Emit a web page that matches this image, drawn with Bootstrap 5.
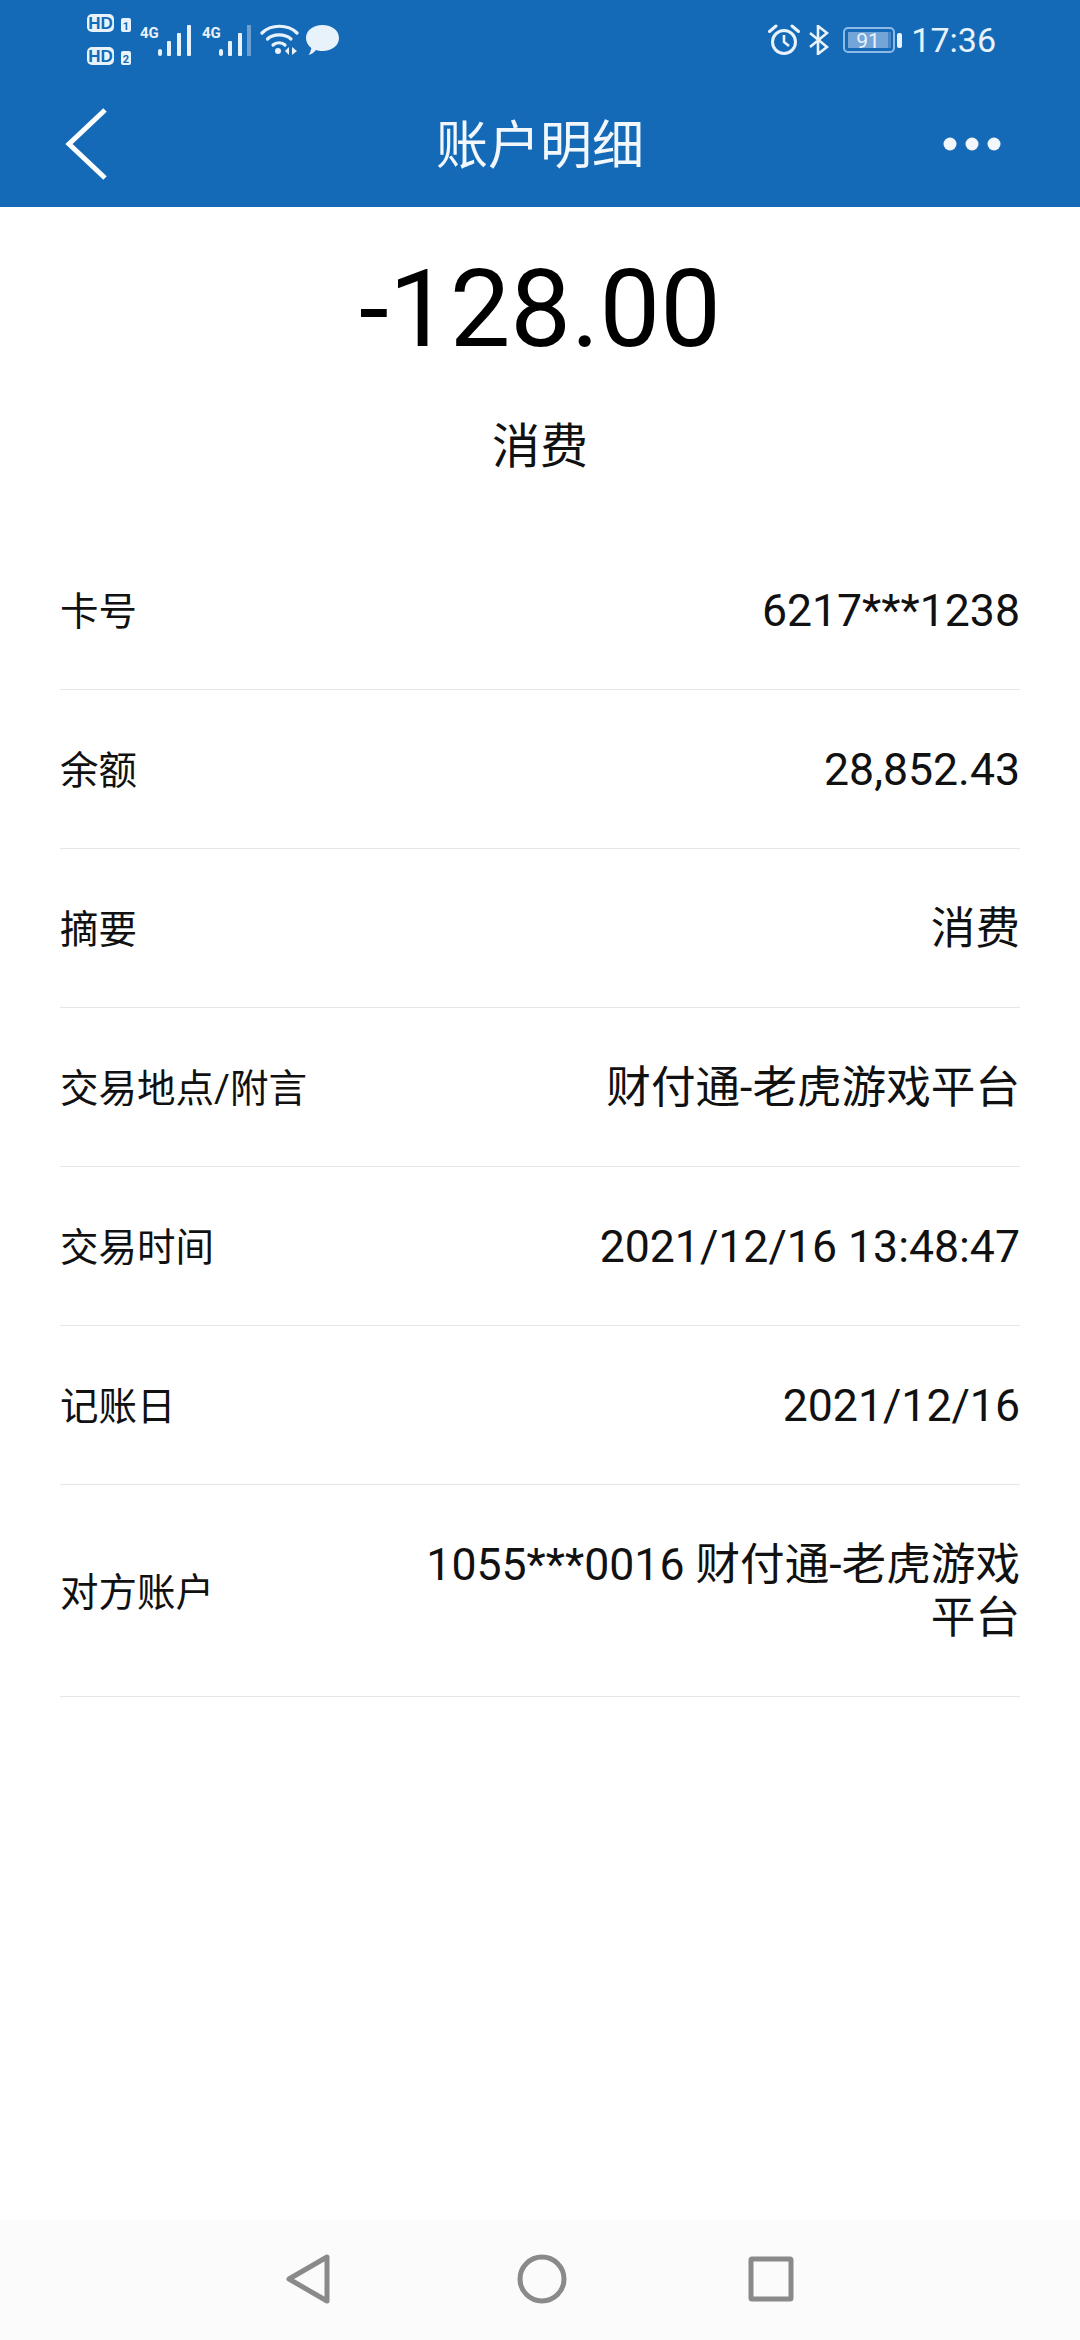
<!DOCTYPE html>
<html lang="zh-CN">
<head>
    <meta charset="UTF-8">
    <meta name="viewport" content="width=device-width, initial-scale=1.0">
    <title>账户明细</title>
    <link href="https://cdn.jsdelivr.net/npm/bootstrap@5.3.0/dist/css/bootstrap.min.css" rel="stylesheet">
    <style>
        html, body { height: 100%; }
        body { width: 1080px; height: 2340px; overflow: hidden; font-family: Roboto, "Noto Sans CJK SC", sans-serif; color: #111; background: #fff; }
        .page-wrap { height: 2340px; }
        .app-head { height: 207px; background: #156ab7; color: #fff; }
        .status-row { height: 80px; padding: 0 84px 0 86px; }
        .status-row svg { display: block; flex: none; }
        .status-time { font-size: 34px; line-height: 1; margin-left: 9px; color: #e8f2fb; }
        .title-row { height: 127px; padding: 0 60px; }
        .head-title { font-size: 52px; line-height: 1; color: #f2f7fc; margin-left: 28px; padding-top: 6px; }
        .back-arrow { margin-left: 5px; }
        .more-dots { margin-right: 19px; }
        .sim-text { font: 700 17px "Liberation Sans", sans-serif; }
        .net-text { font: 700 15px Roboto, sans-serif; }
        .amount-num { font-size: 108px; line-height: 1; margin-top: 48px; color: #000; }
        .amount-kind { font-size: 48px; line-height: 1; margin-top: 60px; height: 108px; color: #111; }
        .info-list { margin: 0 60px; }
        .info-row { height: 159px; border-bottom: 1px solid #e6e6e6; }
        .info-row.tall { height: 212px; }
        .info-label { font-size: 38.5px; line-height: 1.2; white-space: nowrap; padding-top: 5px; }
        .info-value { font-size: 44.6px; line-height: 53px; text-align: right; padding-top: 3px; }
        .info-row.tall .info-value { width: 620px; }
        .soft-nav { height: 120px; background: #fbfbfb; padding-bottom: 2px; }
        .soft-nav svg { display: block; }
    </style>
</head>
<body>
    <div class="page-wrap d-flex flex-column">
        <header class="app-head">
            <div class="status-row d-flex align-items-center">
                <!-- dual sim HD markers -->
                <svg width="46" height="54" viewBox="0 0 46 54">
                    <rect x="1" y="1" width="27" height="18" rx="5" fill="#e8f2fb"/>
                    <text x="14.5" y="16" text-anchor="middle" class="sim-text" fill="#156ab7">HD</text>
                    <rect x="35" y="5" width="10" height="14" rx="2" fill="#e8f2fb"/>
                    <text x="40" y="17" text-anchor="middle" font-size="11" font-weight="700" fill="#156ab7">1</text>
                    <rect x="1" y="34" width="27" height="18" rx="5" fill="#e8f2fb"/>
                    <text x="14.5" y="49" text-anchor="middle" class="sim-text" fill="#156ab7">HD</text>
                    <rect x="35" y="38" width="10" height="14" rx="2" fill="#e8f2fb"/>
                    <text x="40" y="50" text-anchor="middle" font-size="11" font-weight="700" fill="#156ab7">2</text>
                </svg>
                <svg class="ms-2" width="51" height="32" viewBox="0 0 51 32">
                    <text x="0" y="14" class="net-text" fill="#e8f2fb">4G</text>
                    <g fill="#e8f2fb">
                        <rect x="18" y="25" width="4" height="7" rx="2"/>
                        <rect x="27" y="17" width="4" height="15" rx="1"/>
                        <rect x="37" y="9" width="4" height="23" rx="1"/>
                        <rect x="47" y="1" width="4" height="31" rx="1"/>
                    </g>
                </svg>
                <svg width="49" height="32" viewBox="0 0 49 32" style="margin-left:11px">
                    <text x="0" y="14" class="net-text" fill="#e8f2fb">4G</text>
                    <g fill="#e8f2fb">
                        <rect x="17" y="25" width="4" height="7" rx="2"/>
                        <rect x="26" y="17" width="4" height="15" rx="1"/>
                        <rect x="36" y="9" width="4" height="23" rx="1"/>
                        <rect x="45" y="1" width="4" height="31" fill="#6b9fd2"/>
                    </g>
                </svg>
                <svg width="39" height="32" viewBox="0 0 39 32" style="margin-left:9px" fill="none" stroke="#e8f2fb" stroke-width="3.2" stroke-linecap="round">
                    <path d="M2 9C11 0 28 0 37 9"/>
                    <path d="M7.500 15C13 9.500 25 9.500 31 15"/>
                    <path d="M13 21C16 18 22 18 25 21"/>
                    <circle cx="18" cy="27" r="3" fill="#e8f2fb" stroke="none"/>
                    <path d="M29 23L25 27L29 31Z" fill="#e8f2fb" stroke="none"/>
                    <path d="M32 23L37 27L32 31Z" fill="#e8f2fb" stroke="none"/>
                </svg>
                <svg class="me-auto" width="33" height="31" viewBox="0 0 33 31" style="margin-left:7px">
                    <path d="M16.500 0C26 0 33 5.500 33 13C33 20.500 26 26 16.500 26C14 26 12 25.700 10 25C8 27.500 5.500 29.500 2.500 30C4 28 5 25.500 5.300 23C2 20.500 0 17 0 13C0 5.500 7 0 16.500 0Z" fill="#e8f2fb"/>
                </svg>
                <svg width="32" height="32" viewBox="0 0 32 32" fill="none" stroke="#e8f2fb" stroke-width="3">
                    <circle cx="16" cy="18" r="11.500"/>
                    <path d="M16 11V18L21 22" stroke-width="2.600"/>
                    <path d="M1.500 7.500L8 2M30.500 7.500L24 2" stroke-linecap="round"/>
                </svg>
                <svg class="ms-2" width="21" height="30" viewBox="0 0 21 30" fill="none" stroke="#e8f2fb" stroke-width="2.600">
                    <path d="M2 8L19 22L10 29V1L19 8L2 22"/>
                </svg>
                <svg width="59" height="26" viewBox="0 0 59 26" style="margin-left:14px">
                    <rect x="1" y="1" width="50" height="24" rx="4" fill="none" stroke="#8dbbe6" stroke-width="2"/>
                    <rect x="5" y="5" width="40" height="16" fill="#73a5d8"/>
                    <rect x="45" y="5" width="3" height="16" fill="#4a86c4"/>
                    <text x="25" y="21" text-anchor="middle" font-size="21" fill="#e8f2fb">91</text>
                    <rect x="54" y="6" width="5" height="15" rx="2" fill="#e8f2fb"/>
                </svg>
                <span class="status-time">17:36</span>
            </div>
            <div class="title-row d-flex align-items-center justify-content-between">
                <svg class="back-arrow" width="44" height="72" viewBox="0 0 44 72" fill="none" stroke="#fff" stroke-width="5">
                    <path d="M40 2L4 36L40 70"/>
                </svg>
                <span class="head-title">账户明细</span>
                <svg class="more-dots" width="58" height="14" viewBox="0 0 58 14" fill="#f2f7fc">
                    <circle cx="7" cy="7" r="6.500"/>
                    <circle cx="29" cy="7" r="6.500"/>
                    <circle cx="51" cy="7" r="6.500"/>
                </svg>
            </div>
        </header>

        <div class="amount-num text-center">-128.00</div>
        <div class="amount-kind text-center">消费</div>

        <div class="info-list flex-grow-1">
            <div class="info-row d-flex justify-content-between align-items-center">
                <span class="info-label">卡号</span><span class="info-value">6217***1238</span>
            </div>
            <div class="info-row d-flex justify-content-between align-items-center">
                <span class="info-label">余额</span><span class="info-value">28,852.43</span>
            </div>
            <div class="info-row d-flex justify-content-between align-items-center">
                <span class="info-label">摘要</span><span class="info-value">消费</span>
            </div>
            <div class="info-row d-flex justify-content-between align-items-center">
                <span class="info-label">交易地点/附言</span><span class="info-value">财付通-老虎游戏平台</span>
            </div>
            <div class="info-row d-flex justify-content-between align-items-center">
                <span class="info-label">交易时间</span><span class="info-value">2021/12/16 13:48:47</span>
            </div>
            <div class="info-row d-flex justify-content-between align-items-center">
                <span class="info-label">记账日</span><span class="info-value">2021/12/16</span>
            </div>
            <div class="info-row tall d-flex justify-content-between align-items-center">
                <span class="info-label">对方账户</span><span class="info-value">1055***0016 财付通-老虎游戏平台</span>
            </div>
        </div>

        <nav class="soft-nav d-flex align-items-center justify-content-center">
            <svg width="46" height="50" viewBox="0 0 46 50" fill="none" stroke="#8a8a8a" stroke-width="5" stroke-linejoin="round" style="margin-right:185px">
                <path d="M3 25L41 3V47Z"/>
            </svg>
            <svg width="50" height="50" viewBox="0 0 50 50" fill="none" stroke="#8a8a8a" stroke-width="5">
                <circle cx="25" cy="25" r="22"/>
            </svg>
            <svg width="46" height="46" viewBox="0 0 46 46" fill="none" stroke="#8a8a8a" stroke-width="5" stroke-linejoin="round" style="margin-left:181px">
                <rect x="3" y="3" width="40" height="40" rx="1"/>
            </svg>
        </nav>
    </div>
    <script src="https://cdn.jsdelivr.net/npm/bootstrap@5.3.0/dist/js/bootstrap.bundle.min.js"></script>
</body>
</html>
